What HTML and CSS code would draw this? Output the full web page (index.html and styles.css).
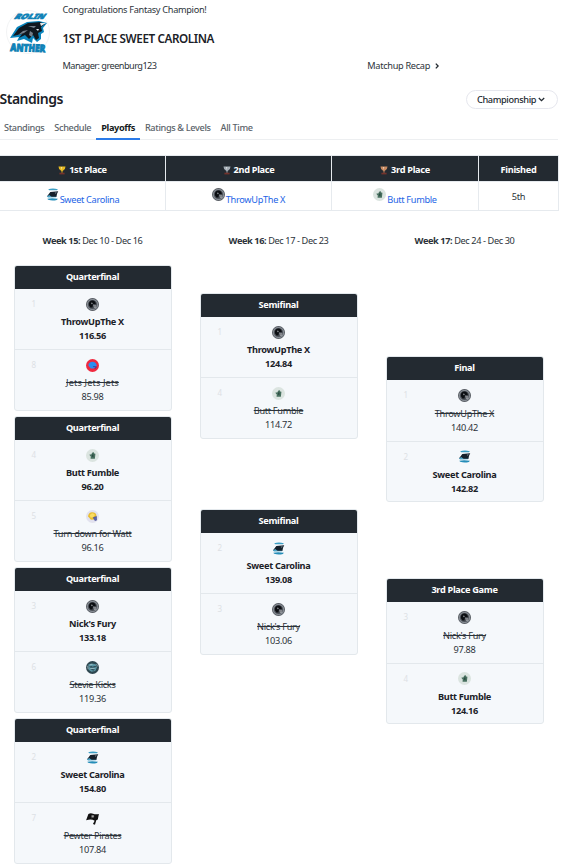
FILE: index.html
```
<!DOCTYPE html>
<html lang="en">
<head>
<meta charset="utf-8">
<title>Standings</title>
<link rel="stylesheet" href="styles.css">
</head>
<body>
<svg class="sprite" aria-hidden="true">
  <symbol id="cat" viewBox="0 0 40 44">
    <path d="M2 28L9 17L19 12L31 11L39 13L35 18L36 22L33 24L33 29L29 32L25 28L24 33L16 29L9 31L11 27Z" fill="#0a85bd"/>
    <path d="M5 26L11 18L20 13L32 12L37 14L33 17L34 21L30 23L31 28L28 30L25 25L21 29L17 25L11 28L14 24Z" fill="#101820"/>
    <path d="M10 25L15 21L20 20L16 23ZM20 16L28 16L26 18ZM22 21L25 23L24 27L21 25Z" fill="#747f8b"/>
    <path d="M32 13L38 13L33 16ZM28 19L31 19L30 21Z" fill="#e3e9ed"/>
  </symbol>
  <symbol id="panther" viewBox="0 0 12 12">
    <path d="M2 1.2Q6-.2 11 1.1L10 2H3Z" fill="#3c9ec4"/>
    <path d="M.8 7.8L4 3.6L11.3 3.1L10.2 5.2L9.6 8.2L5.6 8.4Z" fill="#15202b"/>
    <path d="M.8 7.8L3 6.5L5 8.1L9.7 8L9 8.6L2 8.8Z" fill="#4ca4c7"/>
    <path d="M8 4.4L10 4L9 5.3Z" fill="#8b98a4"/>
    <path d="M1.2 9.9Q6 9.2 11 10L10 11Q6 12 2 10.9Z" fill="#258db8"/>
  </symbol>
  <symbol id="helmet" viewBox="0 0 12 12">
    <circle cx="6" cy="6" r="6" fill="#4e535a"/>
    <circle cx="6" cy="6" r="4.8" fill="none" stroke="#858b92" stroke-width="1.1"/>
    <path d="M2.7 6.6C2.3 3.8 4 2.3 6 2.4C8.1 2.5 9.2 4 9.1 5.8L6.5 5.6L6 8.8L4 8.7Z" fill="#0b0e12"/>
    <path d="M5 4.2L6.2 4.6L5.7 5.8L4.9 5.6ZM6.7 6.5H9.4V9H7.5Z" fill="#a8acb0"/>
    <path d="M7 7.4H9.2" stroke="#30343a" stroke-width=".6"/>
  </symbol>
  <symbol id="fumble" viewBox="0 0 12 12">
    <circle cx="6" cy="6" r="6" fill="#dbe4e0"/>
    <path d="M3 5.3L5.2 4.8L5.5 3.4L7.3 3L7.5 4.2L8.7 4.4L8.2 8.9L4.2 9.1L4.4 7Z" fill="#48705f"/>
    <path d="M5.6 5H7L6.8 7.6L5.5 7Z" fill="#2b4b43"/>
  </symbol>
  <symbol id="jets" viewBox="0 0 12 12">
    <circle cx="6" cy="6" r="6" fill="#f0293f"/>
    <path d="M2.2 6C2.2 1.4 9.7 1.4 9.8 5.8V6.8L8.7 7.5L7 8.8L4.4 8.7Z" fill="#2a8ff0"/>
    <path d="M6.6 7L9.6 7.2L8.2 9.2" fill="none" stroke="#4b3289" stroke-width=".8"/>
  </symbol>
  <symbol id="watt" viewBox="0 0 12 12">
    <circle cx="6" cy="6" r="6" fill="#e2e2ee"/>
    <path d="M2 6C1.7 1 9.2.9 9.7 5L9.2 6.8L7.4 8.7L4.5 8.9Z" fill="#e9bd31"/>
    <path d="M3.4 4.8Q6 1.5 8.3 4.6L6.5 7L4.2 7Z" fill="#f9dc62"/>
    <path d="M6.7 7L9.7 6V9.4L8.2 9.7Z" fill="#5d66ad" stroke="#3b458e" stroke-width=".5"/>
  </symbol>
  <symbol id="kicks" viewBox="0 0 12 12">
    <circle cx="6" cy="6" r="6" fill="#2e4750"/>
    <path d="M2.2 3.2L5 2.2L9 3L10 6L8.5 9.3L5 10L2.4 8Z" fill="#5b97a5"/>
    <path d="M2.7 5.2L5 4.8L6 5.4L9.2 4.6L8.7 5.7L6.5 6L4 6ZM3.8 8L6 7.7L8.4 8L7 8.7Z" fill="#20343e"/>
    <path d="M3.5 3.5L6 3.2M4 7L8 6.8M9.7 2.7L10.7 5M1.5 4.5L2 7.5" stroke="#b5cbd0" stroke-width=".6"/>
  </symbol>
  <symbol id="pirate" viewBox="0 0 12 12">
    <path d="M2.2 1.9Q4.3.4 6.5 1.6Q9 2.6 11.9 1.8L10.9 6.9L9.5 7.6L8.3 11.7L6.4 11L8 8Q5 6.3 .1 7.6Z" fill="#111"/>
    <path d="M5.3 3.2H7.1V4.6H5.3ZM4.8 5.5L7.4 4.6" fill="#aaa" stroke="#999" stroke-width=".4"/>
  </symbol>
  <symbol id="cup" viewBox="0 0 8 9">
    <path d="M.5 .5H7.5Q7.5 3.3 5.2 4.5L4.5 5V6.7H3.5V5L2.8 4.5Q.5 3.3.5 .5Z" fill="currentColor"/>
    <path d="M3 1L4.2 1L3.8 4Z" fill="#fff" opacity=".6"/>
    <path d="M1.4 6.7H6.6V8.4H1.4Z" fill="#74332c"/>
  </symbol>
</svg>

<header class="champion">
  <svg class="crest" viewBox="0 0 44 48">
    <circle cx="22" cy="24" r="21.5" fill="#fff" stroke="#eceeef" stroke-width=".7"/>
    <text class="crest-word" transform="matrix(1 0 -.6 .8 7.5 10.5)" textLength="30" lengthAdjust="spacingAndGlyphs">ROLIN</text>
    <use href="#cat" x="2" y="2" width="40" height="44"/>
    <text class="crest-word" transform="matrix(1 .03 -.1 1.15 4 43)" textLength="35" lengthAdjust="spacingAndGlyphs">ANTHER</text>
  </svg>
  <div class="champion-text">
    <p>Congratulations Fantasy Champion!</p>
    <h1>1ST PLACE SWEET CAROLINA</h1>
    <div class="manager"><span>Manager: greenburg123</span>
      <a class="recap">Matchup Recap<svg viewBox="0 0 4 6" width="4" height="6"><path d="M.8.6L3.1 3L.8 5.4"/></svg></a></div>
  </div>
</header>

<section class="heading">
  <h2>Standings</h2>
  <button>Championship<svg viewBox="0 0 7 5" width="7" height="5"><path d="M.8 1L3.5 3.7L6.2 1"/></svg></button>
</section>
<nav>
  <a>Standings</a><a>Schedule</a><a class="on">Playoffs</a><a>Ratings &amp; Levels</a><a>All Time</a>
</nav>

<table>
  <colgroup><col class="first"><col class="second"><col class="third"><col class="finish"></colgroup>
  <thead><tr>
    <th><svg class="cup gold"><use href="#cup"/></svg>1st Place</th>
    <th><svg class="cup silver"><use href="#cup"/></svg>2nd Place</th>
    <th><svg class="cup bronze"><use href="#cup"/></svg>3rd Place</th>
    <th>Finished</th>
  </tr></thead>
  <tbody><tr>
    <td><div class="team"><svg><use href="#panther"/></svg><a>Sweet Carolina</a></div></td>
    <td><div class="team"><svg><use href="#helmet"/></svg><a>ThrowUpThe X</a></div></td>
    <td><div class="team"><svg><use href="#fumble"/></svg><a>Butt Fumble</a></div></td>
    <td>5th</td>
  </tr></tbody>
</table>

<main class="bracket">
  <section class="round">
    <h3><b>Week 15:</b> Dec 10 - Dec 16</h3>
    <article class="match"><h4>Quarterfinal</h4>
      <div class="side win"><i>1</i><svg><use href="#helmet"/></svg><span class="name">ThrowUpThe X</span><span>116.56</span></div>
      <div class="side lose"><i>8</i><svg><use href="#jets"/></svg><span class="name wide">Jets Jets Jets</span><span>85.98</span></div></article>
    <article class="match"><h4>Quarterfinal</h4>
      <div class="side win"><i>4</i><svg><use href="#fumble"/></svg><span class="name">Butt Fumble</span><span>96.20</span></div>
      <div class="side lose"><i>5</i><svg><use href="#watt"/></svg><span class="name">Turn down for Watt</span><span>96.16</span></div></article>
    <article class="match"><h4>Quarterfinal</h4>
      <div class="side win"><i>3</i><svg><use href="#helmet"/></svg><span class="name">Nick's Fury</span><span>133.18</span></div>
      <div class="side lose"><i>6</i><svg><use href="#kicks"/></svg><span class="name">Stevie Kicks</span><span>119.36</span></div></article>
    <article class="match"><h4>Quarterfinal</h4>
      <div class="side win"><i>2</i><svg><use href="#panther"/></svg><span class="name">Sweet Carolina</span><span>154.80</span></div>
      <div class="side lose"><i>7</i><svg><use href="#pirate"/></svg><span class="name">Pewter Pirates</span><span>107.84</span></div></article>
  </section>
  <section class="round semis">
    <h3><b>Week 16:</b> Dec 17 - Dec 23</h3>
    <article class="match"><h4>Semifinal</h4>
      <div class="side win"><i>1</i><svg><use href="#helmet"/></svg><span class="name">ThrowUpThe X</span><span>124.84</span></div>
      <div class="side lose"><i>4</i><svg><use href="#fumble"/></svg><span class="name">Butt Fumble</span><span>114.72</span></div></article>
    <article class="match"><h4>Semifinal</h4>
      <div class="side win"><i>2</i><svg><use href="#panther"/></svg><span class="name">Sweet Carolina</span><span>139.08</span></div>
      <div class="side lose"><i>3</i><svg><use href="#helmet"/></svg><span class="name">Nick's Fury</span><span>103.06</span></div></article>
  </section>
  <section class="round finals">
    <h3><b>Week 17:</b> Dec 24 - Dec 30</h3>
    <article class="match"><h4>Final</h4>
      <div class="side lose"><i>1</i><svg><use href="#helmet"/></svg><span class="name">ThrowUpThe X</span><span>140.42</span></div>
      <div class="side win"><i>2</i><svg><use href="#panther"/></svg><span class="name">Sweet Carolina</span><span>142.82</span></div></article>
    <article class="match"><h4>3rd Place Game</h4>
      <div class="side lose"><i>3</i><svg><use href="#helmet"/></svg><span class="name">Nick's Fury</span><span>97.88</span></div>
      <div class="side win"><i>4</i><svg><use href="#fumble"/></svg><span class="name">Butt Fumble</span><span>124.16</span></div></article>
  </section>
</main>
</body>
</html>
```
FILE: styles.css
```
* { box-sizing: border-box; }
body {
  margin: 0;
  width: 566px;
  height: 864px;
  overflow: hidden;
  background: #fff;
  color: #2c333a;
  font-family: "Noto Sans", sans-serif;
  font-size: 9.2px;
  line-height: 14px;
  letter-spacing: -.31px;
}
h1, h2, h3, h4, p { margin: 0; font-size: inherit; font-weight: 400; }
svg { flex: none; }
.sprite { display: none; }

.champion { display: flex; height: 80px; }
.crest { width: 44px; height: 48px; margin: 8px 12.5px 0 6px; overflow: visible; }
.crest-word {
  font: 900 9px "Noto Sans", sans-serif;
  letter-spacing: 0;
  fill: #0989c5;
  stroke: #0e7cb0;
  stroke-width: .8;
}
.champion-text { flex: 1; padding-top: 3px; }
h1 {
  margin-top: 13px;
  font-size: 11.7px;
  font-weight: 600;
  line-height: 16px;
  letter-spacing: -.4px;
  color: #1b2127;
}
.manager { display: flex; margin-top: 13px; }
.manager > span { letter-spacing: -.55px; }
.recap { display: flex; align-items: center; gap: 5px; margin-left: auto; margin-right: 127px; }
.recap path, button path { fill: none; stroke: #232a31; stroke-width: 1.3; }

.heading {
  display: flex;
  justify-content: space-between;
  align-items: center;
  width: 558px;
  height: 40px;
}
h2 { margin: 0 0 2px -.5px; font-size: 14px; font-weight: 600; letter-spacing: -.5px; color: #1b2127; }
button {
  display: flex;
  align-items: center;
  justify-content: center;
  gap: 2px;
  width: 92px;
  height: 19px;
  margin-bottom: 1px;
  padding: 0 2px 0 0;
  border: 1px solid #e6e7ee;
  border-radius: 10px;
  background: #fff;
  color: #232a31;
  font: 500 9.2px "Noto Sans", sans-serif;
  letter-spacing: -.36px;
}
nav {
  display: flex;
  width: 558px;
  height: 20px;
  border-bottom: 1px solid #edeff1;
  color: #5b636a;
  font-weight: 500;
  letter-spacing: -.37px;
}
nav a { height: 20px; padding: 1px 5px 0; }
nav a:first-child { padding-left: 4px; }
nav .on { border-bottom: 2px solid #2b7be9; color: #141a20; font-weight: 700; }

table {
  width: 560px;
  margin: 15px 0 0 -1px;
  border-collapse: collapse;
  table-layout: fixed;
}
.first, .second { width: 166px; }
.third { width: 147px; }
th, td { padding: 0; border: 1px solid #e6eaee; text-align: center; }
th { height: 26px; padding-top: 2px; background: #232a31; color: #fff; font-weight: 700; }
td { height: 29px; padding-top: 1px; }
.cup { width: 8px; height: 9px; margin-right: 3px; vertical-align: -2px; }
.gold { color: #e8bb22; }
.silver { color: #a6afb7; }
.bronze { color: #c98b62; }
.team { display: flex; justify-content: center; gap: 1px; height: 20px; }
.team svg { width: 13px; height: 13px; margin-top: 1px; }
.team a { align-self: flex-end; color: #2364e6; }

.bracket { display: flex; margin-left: -.5px; }
.round { width: 186px; padding: 0 14px; }
.round h3 { margin: 23px 0 16.5px; text-align: center; letter-spacing: -.4px; }
.match {
  height: 146px;
  margin-bottom: 5px;
  border: 1px solid #e3e8ec;
  border-radius: 3px;
  overflow: hidden;
  background: #f5f8fb;
}
.match h4 {
  height: 24px;
  margin: -1px -1px 0;
  background: #232a31;
  color: #fff;
  font-weight: 700;
  line-height: 24px;
  text-align: center;
}
.side {
  display: grid;
  justify-items: center;
  grid-template-rows: 13px 17px 19px;
  height: 60.5px;
  padding-top: 9px;
  position: relative;
  line-height: 13px;
}
.side .name { margin-top: 4.5px; }
.side .name + span { margin-top: 1.5px; }
.side + .side { border-top: 1px solid #e3e8ec; padding-top: 8.5px; }
.side svg { width: 13px; height: 13px; }
.side i { position: absolute; left: 17px; top: 8px; font-style: normal; font-size: 8px; color: #dde1e5; }
.win { font-weight: 700; color: #1b2127; }
.win i { font-weight: 400; }
.lose .name { text-decoration: line-through; }
.side .wide { letter-spacing: .13px; }
.semis .match:nth-of-type(1) { margin-top: 44.5px; margin-bottom: 70px; }
.finals .match:nth-of-type(1) { margin-top: 108px; margin-bottom: 76px; }
```
